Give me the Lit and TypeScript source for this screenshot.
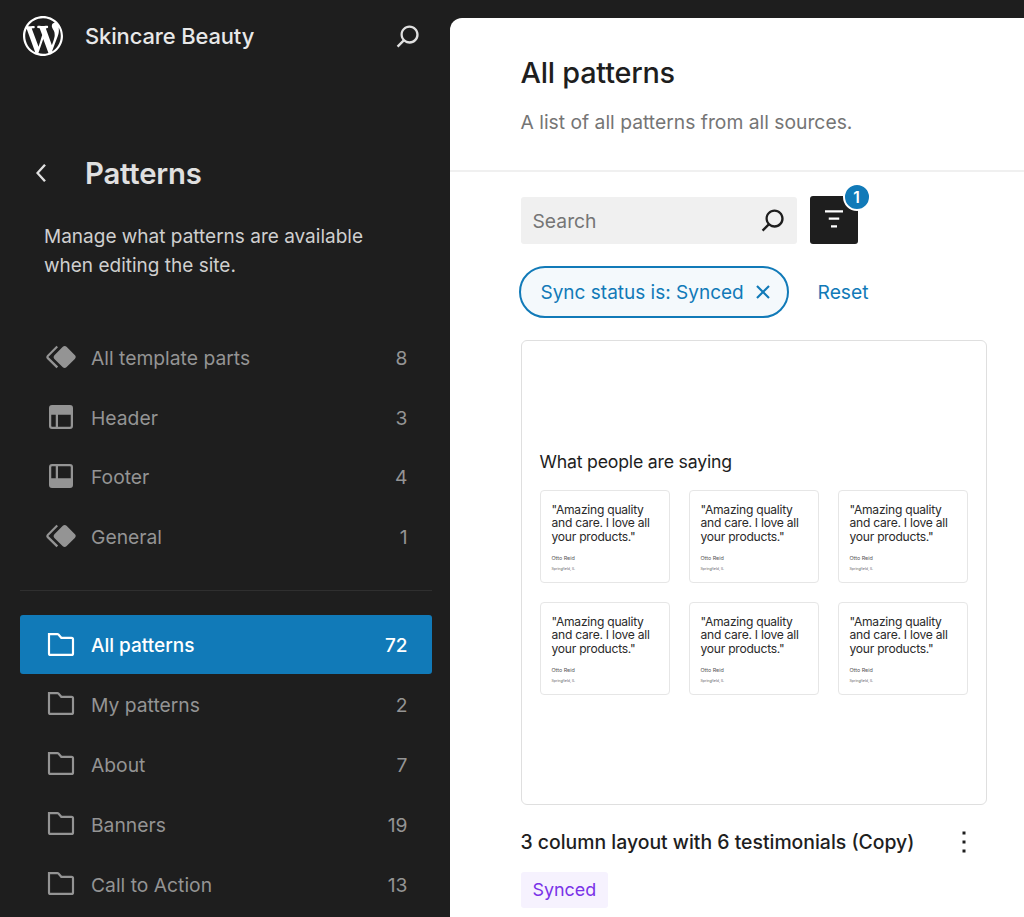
import { LitElement, html, css, svg } from "lit";
import { customElement } from "lit/decorators.js";

const P = {
  wp: "M20 10c0-5.51-4.49-10-10-10C4.48 0 0 4.49 0 10c0 5.52 4.48 10 10 10 5.51 0 10-4.48 10-10zM7.78 15.37L4.37 6.22c.55-.02 1.17-.08 1.17-.08.5-.06.44-1.13-.06-1.11 0 0-1.45.11-2.37.11-.18 0-.37 0-.58-.01C4.12 2.69 6.87 1.11 10 1.11c2.33 0 4.45.87 6.05 2.34-.68-.11-1.65.39-1.65 1.58 0 .74.45 1.36.9 2.1.35.61.55 1.36.55 2.46 0 1.49-1.4 5-1.4 5l-3.03-8.37c.54-.02.82-.17.82-.17.5-.05.44-1.25-.06-1.22 0 0-1.44.12-2.38.12-.87 0-2.33-.12-2.33-.12-.5-.03-.56 1.2-.06 1.22l.92.08 1.26 3.41zM17.41 10c.24-.64.74-1.87.43-4.25.7 1.29 1.05 2.71 1.05 4.25 0 3.29-1.73 6.24-4.4 7.78.97-2.59 1.94-5.2 2.92-7.78zM6.1 18.09C3.12 16.65 1.11 13.53 1.11 10c0-1.3.23-2.48.72-3.59C3.25 10.3 4.67 14.2 6.1 18.09zm4.03-6.63l2.58 6.98c-.86.29-1.76.45-2.71.45-.79 0-1.57-.11-2.29-.33.81-2.38 1.62-4.74 2.42-7.1z",
  search: "M13 5c-3.3 0-6 2.7-6 6 0 1.4.5 2.7 1.3 3.7l-3.8 3.8 1.1 1.1 3.8-3.8c1 .8 2.3 1.3 3.7 1.3 3.3 0 6-2.7 6-6S16.3 5 13 5zm0 10.5c-2.5 0-4.5-2-4.5-4.5s2-4.5 4.5-4.5 4.5 2 4.5 4.5-2 4.5-4.5 4.5z",
  back: "M14.6 7l-1.2-1L8 12l5.4 6 1.2-1-4.6-5z",
  symbol: "M21.3 10.8l-5.6-5.6c-.7-.7-1.8-.7-2.5 0l-5.6 5.6c-.7.7-.7 1.8 0 2.5l5.6 5.6c.3.3.8.5 1.2.5s.9-.2 1.2-.5l5.6-5.6c.8-.7.8-1.9.1-2.5zm-17.6 1L10 5.5l-1-1-6.3 6.3c-.7.7-.7 1.8 0 2.5L9 19.5l1.1-1.1-6.3-6.3c-.2 0-.2-.2-.1-.3z",
  header: "M18.5 10.5H10v8h8a.5.5 0 00.5-.5v-7.5zm-10 0h-3V18a.5.5 0 00.5.5h2.5v-8zM6 4h12a2 2 0 012 2v12a2 2 0 01-2 2H6a2 2 0 01-2-2V6a2 2 0 012-2z",
  footer: "M18 5.5h-8v8h8.5V6a.5.5 0 00-.5-.5zM8.5 5.5H6a.5.5 0 00-.5.5v7.5h3v-8zM6 4h12a2 2 0 012 2v12a2 2 0 01-2 2H6a2 2 0 01-2-2V6a2 2 0 012-2z",
  close: "M12 13.06l3.712 3.713 1.061-1.06L13.061 12l3.712-3.712-1.06-1.06L12 10.938 8.288 7.227l-1.061 1.06L10.939 12l-3.712 3.712 1.06 1.061L12 13.061z",
  funnel: "M6 5.5h12V7H6V5.5zm2.5 4.75h7v1.5h-7v-1.5zM10 15.5h4V17h-4v-1.5z",
  kebab: "M13 19h-2v-2h2v2zm0-6h-2v-2h2v2zm0-6h-2V5h2v2z",
};

const icon = (d: string, cls = "ic") =>
  html`<svg class=${cls} viewBox="0 0 24 24" fill="currentColor" aria-hidden="true">${svg`<path d=${d}></path>`}</svg>`;

const folder = html`<svg class="ic" viewBox="0 0 24 24" fill="none" stroke="currentColor" stroke-width="1.45" aria-hidden="true">${svg`<path d="M4 4.7h5.6c.3 0 .5.1.7.3l1.9 2.2h6.8c.6 0 1 .4 1 1v9.4c0 .6-.4 1-1 1H5c-.6 0-1-.4-1-1V4.7z"></path>`}</svg>`;

const partRows = [
  { i: icon(P.symbol), l: "All template parts", n: "8" },
  { i: icon(P.header), l: "Header", n: "3" },
  { i: icon(P.footer), l: "Footer", n: "4" },
  { i: icon(P.symbol), l: "General", n: "1" },
];
const catRows = [
  { l: "All patterns", n: "72", on: true },
  { l: "My patterns", n: "2" },
  { l: "About", n: "7" },
  { l: "Banners", n: "19" },
  { l: "Call to Action", n: "13" },
];

@customElement("app-root")
export class AppRoot extends LitElement {
  static styles = css`
    :host {
      display: flex;
      width: 1024px;
      height: 917px;
      overflow: hidden;
      background: #1e1e1e;
      font-family: Inter, "Liberation Sans", sans-serif;
      -webkit-font-smoothing: antialiased;
    }
    .ic { width: 36px; height: 36px; display: block; flex: none; }
    .side { width: 449.5px; flex: none; color: #e0e0e0; box-sizing: border-box; }
    .brand { display: flex; align-items: center; height: 72px; padding: 0 24px 0 23px; }
    .logo { width: 40px; height: 40px; color: #fff; flex: none; }
    .site { margin-left: 22px; font-size: 21.9px; font-weight: 500; flex: 1; color: #e8e8e8; letter-spacing: -0.1px; }
    .title { display: flex; align-items: center; margin-top: 79px; height: 44px; padding-left: 24px; }
    .title h1 { margin: 0 0 0 25px; font-size: 29.3px; font-weight: 600; color: #e0e0e0; letter-spacing: -0.2px; }
    .desc { margin: 27px 40px 0 44px; font-size: 19px; line-height: 29.2px; color: #cfcfcf; }
    .list { margin: 0 18px 0 19.5px; }
    .list.parts { margin-top: 46.5px; }
    .row {
      display: flex; align-items: center; height: 59.8px; border-radius: 3px;
      padding: 0 24px 0 23.5px; color: #949494; font-size: 19.3px;
    }
    .row > span { padding-top: 2px; }
    .row .lab { margin-left: 12px; flex: 1; }
    .row.on { background: #117ab8; color: #fff; font-weight: 500; font-size: 19px; }
    .divider { height: 1px; background: #2f2f2f; margin: 24px 18px 23.6px 19.5px; }
    .main {
      flex: 1; min-width: 0; margin-top: 18px; background: #fff;
      border-top-left-radius: 12px; overflow: hidden; color: #1e1e1e;
    }
    .head { height: 154px; box-sizing: border-box; padding: 35px 0 0 71px; border-bottom: 2px solid #f0f0f0; }
    .head h2 { margin: 0; font-size: 28.8px; font-weight: 500; line-height: 40px; letter-spacing: -0.2px; }
    .head p { margin: 14px 0 0; font-size: 19.3px; line-height: 30px; color: #757575; }
    .body { padding: 24px 37px 0 71px; }
    .tools { display: flex; align-items: center; gap: 13px; }
    .search {
      width: 276px; height: 47px; box-sizing: border-box; background: #f0f0f0; border-radius: 3px;
      display: flex; align-items: center; justify-content: space-between; padding: 2px 6px 0 12px;
      font-size: 19.3px; color: #757575;
    }
    .search .ic { color: #1e1e1e; margin-top: -2px; }
    .fbtn {
      position: relative; width: 48px; height: 48px; background: #1e1e1e; color: #fff;
      border-radius: 3px; display: flex; align-items: center; justify-content: center;
    }
    .badge {
      position: absolute; right: -13px; top: -13px; width: 24px; height: 24px; border-radius: 50%;
      background: #117ab8; color: #fff; border: 2px solid #fff; font-size: 15.5px; font-weight: 600;
      display: flex; align-items: center; justify-content: center;
    }
    .chips { display: flex; align-items: center; margin: 22px 0 0 -2px; }
    .chip {
      height: 52px; width: 270px; box-sizing: border-box; border: 2px solid #117ab8; border-radius: 26px;
      background: #f4f9fc; color: #117ab8; display: flex; align-items: center; padding-left: 20px; font-size: 19px;
      white-space: nowrap;
    }
    .chip .ic { width: 34px; height: 34px; margin-left: 2px; }
    .reset { margin-left: 29px; color: #117ab8; font-size: 19.3px; }
    .preview {
      margin-top: 22px; width: 466px; height: 465px; box-sizing: border-box; border: 1px solid #dfdfdf;
      border-radius: 6px; padding: 0 18px; display: flex; flex-direction: column; justify-content: center;
    }
    .preview h3 { margin: 0; font-size: 17.7px; font-weight: 400; line-height: 23px; color: #1e1e1e; letter-spacing: -0.2px; }
    .grid { margin-top: 17px; display: grid; grid-template-columns: repeat(3, 130px); gap: 19px; }
    .card {
      height: 93px; box-sizing: border-box; border: 1px solid #e6e6e6; border-radius: 4px; padding: 12px 11px 0;
    }
    .card q { display: block; quotes: none; font-size: 12.1px; line-height: 13.4px; color: #2a2a2a; letter-spacing: -0.25px; }
    .card .nm { font-size: 5.4px; line-height: 7px; margin-top: 12px; color: #555; }
    .card .ct { font-size: 3.6px; line-height: 5px; margin-top: 5px; color: #666; }
    .meta { display: flex; align-items: center; justify-content: space-between; margin-top: 21px; height: 32px; width: 466px; }
    .meta .nm { font-size: 19.4px; font-weight: 500; color: #1e1e1e; white-space: nowrap; }
    .meta .ic { margin-right: 5px; }
    .tag {
      display: inline-block; margin-top: 14px; height: 36px; line-height: 36px; padding: 0 11.5px 0 12px; border-radius: 3px;
      background: #f6f2fe; color: #7a33e8; font-size: 17.9px; font-weight: 400;
    }
  `;

  render() {
    const cards = [0, 1, 2, 3, 4, 5];
    return html`
      <aside class="side">
        <div class="brand">
          <svg class="logo" viewBox="0 0 20 20" fill="currentColor" aria-hidden="true">${svg`<path d=${P.wp}></path>`}</svg>
          <span class="site">Skincare Beauty</span>
          ${icon(P.search)}
        </div>
        <div class="title">${icon(P.back)}<h1>Patterns</h1></div>
        <p class="desc">Manage what patterns are available when editing the site.</p>
        <div class="list parts">
          ${partRows.map((r) => html`<div class="row">${r.i}<span class="lab">${r.l}</span><span>${r.n}</span></div>`)}
        </div>
        <div class="divider"></div>
        <div class="list">
          ${catRows.map((r) => html`<div class="row ${r.on ? "on" : ""}">${folder}<span class="lab">${r.l}</span><span>${r.n}</span></div>`)}
        </div>
      </aside>
      <main class="main">
        <div class="head">
          <h2>All patterns</h2>
          <p>A list of all patterns from all sources.</p>
        </div>
        <div class="body">
          <div class="tools">
            <div class="search"><span>Search</span>${icon(P.search)}</div>
            <div class="fbtn">${icon(P.funnel)}<span class="badge">1</span></div>
          </div>
          <div class="chips">
            <div class="chip"><span>Sync status is: Synced</span>${icon(P.close)}</div>
            <span class="reset">Reset</span>
          </div>
          <div class="preview">
            <h3>What people are saying</h3>
            <div class="grid">
              ${cards.map(() => html`<div class="card">
                <q>"Amazing quality and care. I love all your products."</q>
                <div class="nm">Otto Reid</div>
                <div class="ct">Springfield, IL</div>
              </div>`)}
            </div>
          </div>
          <div class="meta"><span class="nm">3 column layout with 6 testimonials (Copy)</span>${icon(P.kebab)}</div>
          <span class="tag">Synced</span>
        </div>
      </main>
    `;
  }
}
